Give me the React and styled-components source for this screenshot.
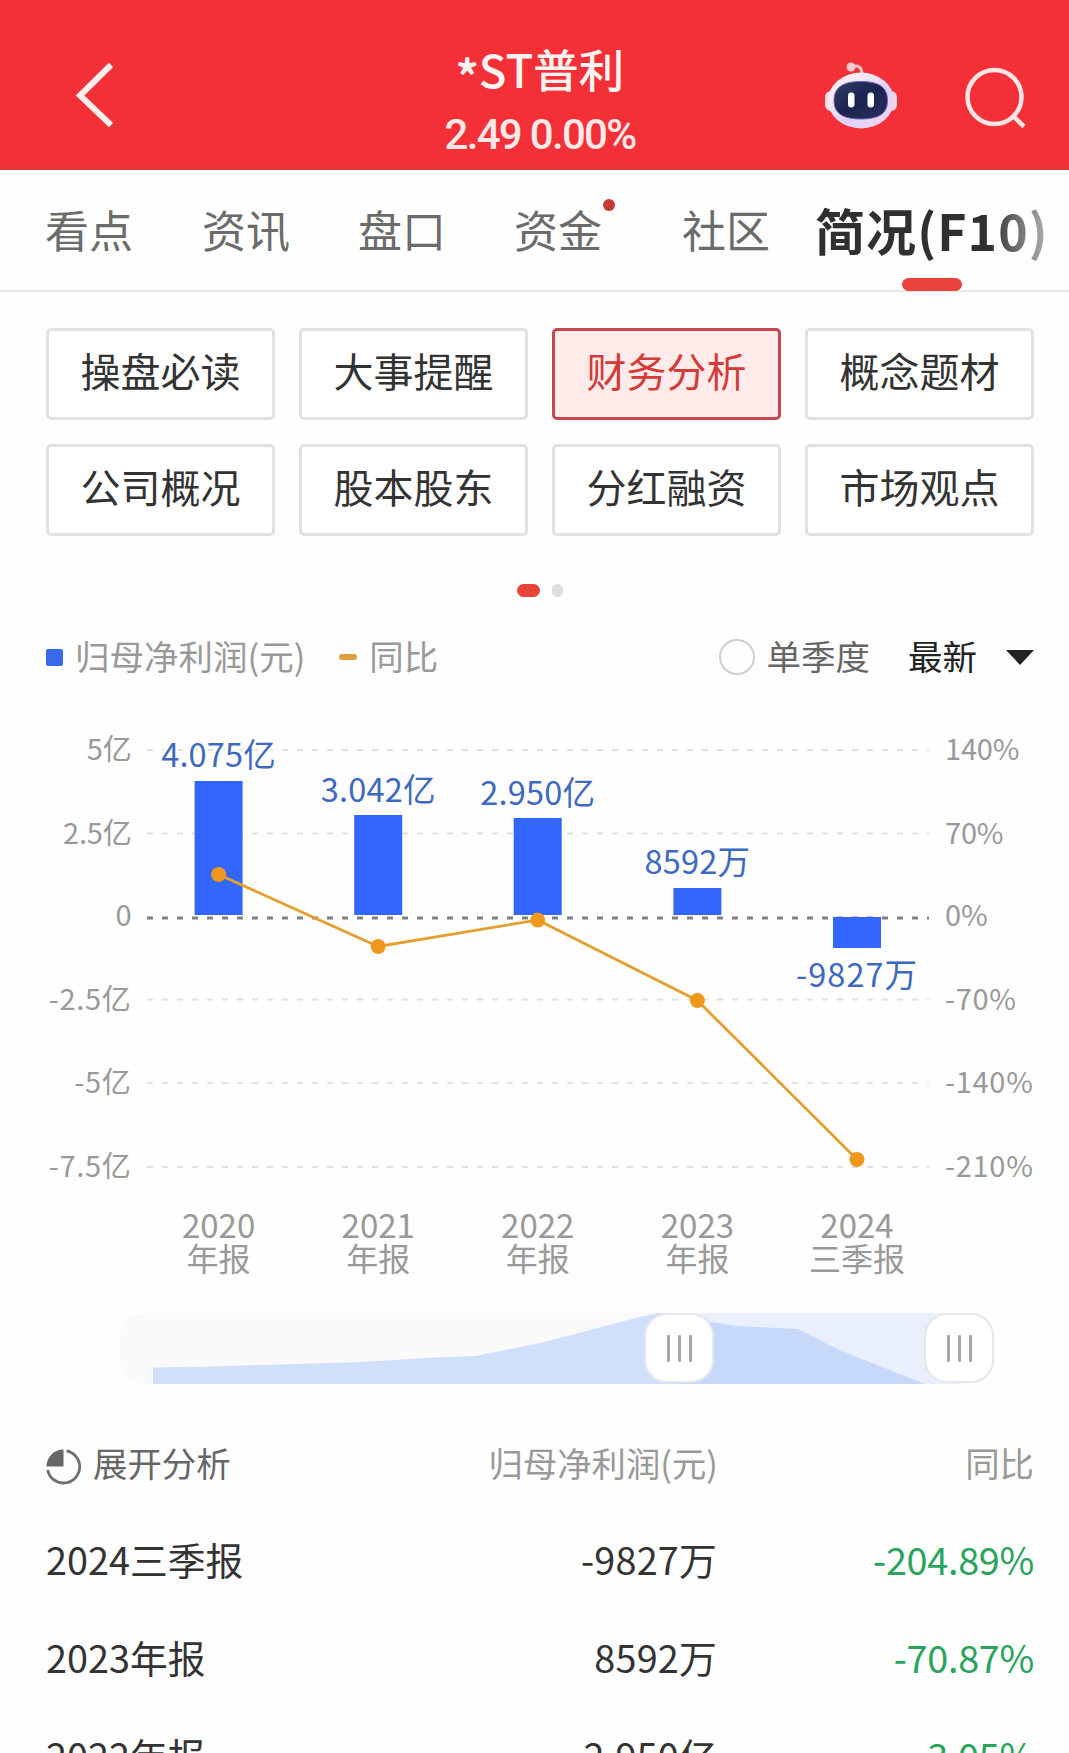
import React from 'react'
import styled, { createGlobalStyle } from 'styled-components'

const tabs = ['看点', '资讯', '盘口', '资金', '社区', '简况(F10)']

const sections = [
  '操盘必读', '大事提醒', '财务分析', '概念题材',
  '公司概况', '股本股东', '分红融资', '市场观点',
]

const ticks = [
  { y: 750, left: '5亿', right: '140%' },
  { y: 833.5, left: '2.5亿', right: '70%' },
  { y: 918, left: '0', right: '0%' },
  { y: 999.5, left: '-2.5亿', right: '-70%' },
  { y: 1083, left: '-5亿', right: '-140%' },
  { y: 1167, left: '-7.5亿', right: '-210%' },
]

const bars = [
  { x: 218.6, top: 781, bottom: 915, point: 874.5, label: '4.075亿', labelY: 767, year: '2020', term: '年报' },
  { x: 378.2, top: 815, bottom: 915, point: 946.5, label: '3.042亿', labelY: 802, year: '2021', term: '年报' },
  { x: 537.7, top: 818, bottom: 915, point: 920, label: '2.950亿', labelY: 804.5, year: '2022', term: '年报' },
  { x: 697.4, top: 888, bottom: 915, point: 1000.5, label: '8592万', labelY: 873.5, year: '2023', term: '年报' },
  { x: 857, top: 917, bottom: 948, point: 1159.5, label: '-9827万', labelY: 986.5, year: '2024', term: '三季报' },
]

const rows = [
  { name: '2024三季报', profit: '-9827万', change: '-204.89%' },
  { name: '2023年报', profit: '8592万', change: '-70.87%' },
  { name: '2022年报', profit: '2.950亿', change: '-3.05%' },
]

function Robot() {
  return (
    <svg width="74" height="70" viewBox="824 60 74 70" fill="none">
      <defs>
        <linearGradient id="shell" x1="0" y1="0" x2="1" y2="1">
          <stop offset="0.2" stopColor="#ffeef0" />
          <stop offset="0.6" stopColor="#ddd2fa" />
          <stop offset="1" stopColor="#ffd9e6" />
        </linearGradient>
        <linearGradient id="face" x1="0" y1="0" x2="1" y2="1">
          <stop offset="0" stopColor="#333a66" />
          <stop offset="0.5" stopColor="#1b2450" />
          <stop offset="1" stopColor="#2b2f5c" />
        </linearGradient>
      </defs>
      <path d="M851 67C858 64.500 862 67 862 74" stroke="#ffc9cd" strokeWidth="3" />
      <circle cx="851" cy="67" r="4.500" fill="#ffc9cd" />
      <rect x="825" y="91" width="12" height="20" rx="6" fill="#fbdde8" />
      <rect x="885" y="91" width="12" height="20" rx="6" fill="#f9d5ea" />
      <ellipse cx="861" cy="100.500" rx="33" ry="28" fill="url(#shell)" />
      <path
        d="M861 81.500C880 81.500 887.500 88 887.500 100.500C887.500 113 880 119 861 119C842 119 834 113 834 100.500C834 88 842 81.500 861 81.500Z"
        fill="url(#face)" stroke="#6e67bd" strokeWidth="1"
      />
      <rect x="848" y="92.500" width="6.500" height="15" rx="3.200" fill="#fff" />
      <rect x="867.500" y="92.500" width="6.500" height="15" rx="3.200" fill="#fff" />
    </svg>
  )
}

function Chart() {
  return (
    <ChartSvg viewBox="0 690 1069 600">
      {ticks.map((t) => (
        <g key={t.left}>
          <line
            x1="147" x2="929" y1={t.y} y2={t.y}
            stroke={t.left === '0' ? '#808080' : '#e0e0e0'}
            strokeWidth={t.left === '0' ? 3 : 2}
            strokeDasharray="6 9"
          />
          <AxisText x="131.500" y={t.left === '0' ? 926 : t.y + 10} textAnchor="end" $negative={t.left[0] === '-'}>
            {t.left}
          </AxisText>
          <AxisText x="945" y={t.left === '0' ? 926 : t.y + 10} $negative={t.right[0] === '-'}>
            {t.right}
          </AxisText>
        </g>
      ))}

      {bars.map((b) => (
        <g key={b.year}>
          <rect x={b.x - 24} y={b.top} width="48" height={b.bottom - b.top} fill="#3366ff" />
          <BarText x={b.x} y={b.labelY} $negative={b.label[0] === '-'}>{b.label}</BarText>
          <YearText x={b.x} y="1238">{b.year}</YearText>
          <TermText x={b.x} y="1271">{b.term}</TermText>
        </g>
      ))}

      <polyline
        points={bars.map((b) => `${b.x},${b.point}`).join(' ')}
        fill="none" stroke="#e3a02f" strokeWidth="2.800"
      />
      {bars.map((b) => (
        <circle key={b.year} cx={b.x} cy={b.point} r="7.500" fill="#f0981c" />
      ))}
    </ChartSvg>
  )
}

function RangeSlider() {
  const area = 'M33 71V54.500L93 53.500L241 49L315 44.500L355 43L420 30L520 4L552 -3L590 9L616 13L678 16L719 37L805 71Z'
  return (
    <Slider>
      <SliderArea viewBox="0 0 874 71">
        <defs>
          <clipPath id="before"><rect x="0" y="0" width="559" height="71" /></clipPath>
          <clipPath id="selected"><rect x="559" y="0" width="281" height="71" /></clipPath>
        </defs>
        <rect x="559" y="0" width="281" height="71" fill="#e9effc" />
        <path d={area} fill="#d1e0fa" clipPath="url(#before)" />
        <path d={area} fill="#c6d9fa" clipPath="url(#selected)" />
      </SliderArea>
      <Handle $left={524}><Grip /><Grip /><Grip /></Handle>
      <Handle $left={804}><Grip /><Grip /><Grip /></Handle>
    </Slider>
  )
}

function App() {
  return (
    <Page>
      <GlobalStyle />

      <Header>
        <Back>
          <svg width="38" height="66" viewBox="0 0 38 66" fill="none" stroke="#fff0ee" strokeWidth="6">
            <path d="M36 3L5 33.500L36 63" />
          </svg>
        </Back>
        <Title>
          <Name><Star>*</Star>ST普利</Name>
          <Price>2.49 0.00%</Price>
        </Title>
        <Actions>
          <Robot />
          <svg width="62" height="62" viewBox="0 0 62 62" fill="none" stroke="#ffe6e4" strokeWidth="4.500">
            <circle cx="29.500" cy="30" r="27" />
            <path d="M47.500 48.500L59 59.500" />
          </svg>
        </Actions>
      </Header>

      <Tabs>
        {tabs.map((tab) => (
          <Tab key={tab} $active={tab === '简况(F10)'}>
            {tab}
            {tab === '资金' && <Dot />}
            {tab === '简况(F10)' && <Underline />}
          </Tab>
        ))}
        <Fade />
      </Tabs>

      <Sections>
        {sections.map((s) => (
          <Section key={s} $active={s === '财务分析'}>{s}</Section>
        ))}
      </Sections>

      <Pager>
        <PagerDot $active />
        <PagerDot />
      </Pager>

      <Legend>
        <BlueMark />
        <LegendText>归母净利润(元)</LegendText>
        <OrangeMark />
        <LegendText>同比</LegendText>
        <Filters>
          <Radio />
          <Quarter>单季度</Quarter>
          <Latest>最新</Latest>
          <Caret />
        </Filters>
      </Legend>

      <Chart />
      <RangeSlider />

      <TableHead>
        <Expand>
          <svg width="36" height="36" viewBox="0 0 36 36" fill="none">
            <path d="M17.500 0.500V17.500H0.500A17 17 0 0 1 17.500 0.500Z" fill="#666" />
            <path d="M20.500 1.900A16.200 16.200 0 1 1 1.600 21" stroke="#707070" strokeWidth="2.800" />
          </svg>
          展开分析
        </Expand>
        <HeadCell>归母净利润(元)</HeadCell>
        <HeadCell>同比</HeadCell>
      </TableHead>
      {rows.map((r) => (
        <Row key={r.name}>
          <span>{r.name}</span>
          <Cell>{r.profit}</Cell>
          <Cell $down>{r.change}</Cell>
        </Row>
      ))}
    </Page>
  )
}

const GlobalStyle = createGlobalStyle`
  * {
    box-sizing: border-box;
  }
  body {
    margin: 0;
    background-color: #fefefe;
  }
`
const Page = styled.div`
  width: 1069px;
  height: 1753px;
  overflow: hidden;
  background-color: #fefefe;
  color: #333;
  font-family: 'Noto Sans CJK SC', sans-serif;
  white-space: nowrap;
`
const Header = styled.header`
  display: grid;
  grid-template-columns: 372px 336px 361px;
  height: 170px;
  background: linear-gradient(#f32f38 162px, #e33539 169px);
`
const Back = styled.div`
  padding: 62px 0 0 75px;
`
const Title = styled.div`
  display: flex;
  flex-direction: column;
  align-items: center;
  padding-top: 41px;
  color: #fff3f1;
`
const Name = styled.div`
  display: flex;
  font-size: 45.500px;
  font-weight: 500;
  line-height: 54px;
`
const Star = styled.span`
  padding-top: 6px;
  font-weight: 700;
`
const Price = styled.div`
  margin-top: 9px;
  font-family: Roboto, sans-serif;
  font-size: 42px;
  font-weight: 500;
  line-height: 50px;
  letter-spacing: -1.700px;
  color: #ffe9e7;
`
const Actions = styled.div`
  display: flex;
  justify-content: flex-end;
  gap: 67px;
  padding: 60px 42px 0 0;

  svg:last-child {
    margin-top: 7px;
  }
`
const Tabs = styled.nav`
  position: relative;
  display: grid;
  grid-template-columns: 157px 156px 156px 168px 133px auto;
  height: 122px;
  padding-left: 45px;
  border-bottom: 2px solid #e6e6e6;
`
const Tab = styled.div`
  position: relative;
  justify-self: start;
  line-height: 119px;
  font-size: ${(p) => (p.$active ? '50px' : '44px')};
  font-weight: ${(p) => (p.$active ? 700 : 400)};
  letter-spacing: ${(p) => (p.$active ? '1.100px' : 0)};
  color: ${(p) => (p.$active ? '#303030' : '#6b6b6b')};
`
const Dot = styled.span`
  position: absolute;
  top: 29px;
  right: -13px;
  width: 12px;
  height: 12px;
  border-radius: 50%;
  background-color: #c53a34;
`
const Underline = styled.span`
  position: absolute;
  left: 87px;
  bottom: -1px;
  width: 60px;
  height: 13px;
  border-radius: 7px;
  background-color: #e8433a;
`
const Fade = styled.div`
  position: absolute;
  top: 20px;
  right: 0;
  width: 80px;
  height: 80px;
  background: linear-gradient(to right, rgba(254, 254, 254, 0), rgba(254, 254, 254, 0.85));
`
const Sections = styled.div`
  display: grid;
  grid-template-columns: repeat(4, 229px);
  gap: 24px;
  padding: 36px 0 0 46px;
`
const Section = styled.div`
  height: 92px;
  border: 3px solid ${(p) => (p.$active ? '#c24a4d' : '#e1e1e1')};
  border-radius: 5px;
  background-color: ${(p) => (p.$active ? '#ffecea' : '#fff')};
  color: ${(p) => (p.$active ? '#d23b38' : '#333')};
  font-size: 40px;
  line-height: 79px;
  text-align: center;
`
const Pager = styled.div`
  display: flex;
  gap: 12px;
  height: 13px;
  margin: 48px 0 27px 517px;
`
const PagerDot = styled.span`
  width: ${(p) => (p.$active ? '23px' : '11px')};
  height: 13px;
  border-radius: 7px;
  background-color: ${(p) => (p.$active ? '#ea4339' : '#dedede')};
`
const Legend = styled.div`
  display: flex;
  align-items: center;
  height: 66px;
  padding: 0 35px 0 46px;
  font-size: 34.500px;
  line-height: 62px;
`
const BlueMark = styled.span`
  width: 17px;
  height: 17px;
  border-radius: 2px;
  background-color: #3a69ee;
`
const OrangeMark = styled.span`
  width: 18px;
  height: 6px;
  margin-left: 34px;
  border-radius: 3px;
  background-color: #dda03c;
`
const LegendText = styled.span`
  height: 66px;
  margin-left: 12px;
  color: #999;
`
const Filters = styled.div`
  display: flex;
  align-items: center;
  height: 66px;
  margin-left: auto;
`
const Radio = styled.span`
  width: 36px;
  height: 36px;
  border: 2px solid #cfcfcf;
  border-radius: 50%;
`
const Quarter = styled.span`
  height: 66px;
  margin-left: 12px;
  color: #666;
`
const Latest = styled.span`
  height: 66px;
  margin-left: 38px;
  color: #222;
`
const Caret = styled.span`
  margin-left: 29px;
  border-left: 14px solid transparent;
  border-right: 14px solid transparent;
  border-top: 15px solid #222;
`
const ChartSvg = styled.svg`
  display: block;
  width: 1069px;
  height: 600px;
`
const AxisText = styled.text`
  font-size: 29px;
  letter-spacing: ${(p) => (p.$negative ? '0.700px' : '-0.200px')};
  fill: #999;
`
const BarText = styled.text`
  font-size: 32.500px;
  letter-spacing: ${(p) => (p.$negative ? '1px' : '0.200px')};
  text-anchor: middle;
  fill: #3d6ac0;
  stroke: #fefefe;
  stroke-width: 6px;
  paint-order: stroke;
`
const YearText = styled.text`
  font-size: 33px;
  text-anchor: middle;
  fill: #999;
`
const TermText = styled.text`
  font-size: 32px;
  text-anchor: middle;
  fill: #999;
`
const Slider = styled.div`
  position: relative;
  width: 874px;
  height: 71px;
  margin: 23px 0 0 120px;
  border-radius: 24px;
  background-color: #fafafa;
`
const SliderArea = styled.svg`
  display: block;
  width: 874px;
  height: 71px;
`
const Handle = styled.div`
  position: absolute;
  top: 0;
  left: ${(p) => p.$left}px;
  display: flex;
  justify-content: center;
  align-items: center;
  gap: 8px;
  width: 70px;
  height: 70px;
  border: 2px solid #e6e7ea;
  border-radius: 23px;
  background-color: #fff;
`
const Grip = styled.span`
  width: 3px;
  height: 27px;
  border-radius: 1px;
  background-color: #a6a6a6;
`
const TableHead = styled.div`
  display: grid;
  grid-template-columns: 300px 372px 316px;
  margin: 48px 0 17px 46px;
  font-size: 34.400px;
  line-height: 60px;
`
const Expand = styled.div`
  display: flex;
  gap: 11px;
  color: #666;

  svg {
    margin-top: 17px;
  }
`
const HeadCell = styled.div`
  text-align: right;
  color: #999;
`
const Row = styled.div`
  display: grid;
  grid-template-columns: 300px 371px 317px;
  height: 98px;
  margin-left: 46px;
  font-size: 37.800px;
  line-height: 99px;
`
const Cell = styled.div`
  text-align: right;
  letter-spacing: ${(p) => (p.$down ? '-0.300px' : '0.200px')};
  color: ${(p) => (p.$down ? '#2aa45c' : '#333')};
`

export default App
